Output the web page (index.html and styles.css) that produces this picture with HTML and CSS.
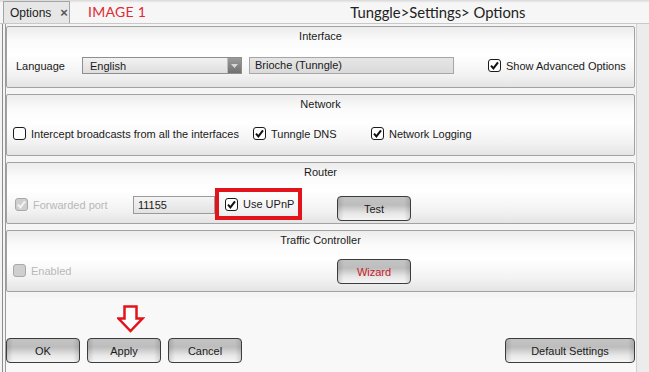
FILE: index.html
```html
<!DOCTYPE html>
<html>
<head>
<meta charset="utf-8">
<link rel="stylesheet" href="styles.css">
</head>
<body>
<div class="window">
  <div class="topbar">
    <div class="tab"><span>Options</span><span class="tab-x">×</span></div>
    <div class="img-label">IMAGE 1</div>
    <div class="crumb">Tunggle&gt;Settings&gt; Options</div>
  </div>
  <div class="frame">
    <div class="content">
      <div class="panel">
        <div class="panel-title">Interface</div>
        <div class="panel-body iface">
          <span class="lang-label">Language</span>
          <div class="select"><span>English</span><span class="select-btn"><svg width="7" height="4" viewBox="0 0 7 4"><path d="M0 0H7L3.5 4Z" fill="#d8d8d8"/></svg></span></div>
          <div class="field">Brioche (Tunngle)</div>
          <label class="check adv"><svg class="cb" width="13" height="13" viewBox="0 0 13 13"><rect x="0.5" y="0.5" width="12" height="12" rx="2.5" fill="#fff" stroke="#1a1a1a"/><path d="M3 6.6L5.4 9.4L10 3.4" fill="none" stroke="#111" stroke-width="2"/></svg>Show Advanced Options</label>
        </div>
      </div>
      <div class="panel">
        <div class="panel-title">Network</div>
        <div class="panel-body net">
          <label class="check w240"><svg class="cb" width="13" height="13" viewBox="0 0 13 13"><rect x="0.5" y="0.5" width="12" height="12" rx="2.5" fill="#fff" stroke="#1a1a1a"/></svg>Intercept broadcasts from all the interfaces</label>
          <label class="check w118"><svg class="cb" width="13" height="13" viewBox="0 0 13 13"><rect x="0.5" y="0.5" width="12" height="12" rx="2.5" fill="#fff" stroke="#1a1a1a"/><path d="M3 6.6L5.4 9.4L10 3.4" fill="none" stroke="#111" stroke-width="2"/></svg>Tunngle DNS</label>
          <label class="check"><svg class="cb" width="13" height="13" viewBox="0 0 13 13"><rect x="0.5" y="0.5" width="12" height="12" rx="2.5" fill="#fff" stroke="#1a1a1a"/><path d="M3 6.6L5.4 9.4L10 3.4" fill="none" stroke="#111" stroke-width="2"/></svg>Network Logging</label>
        </div>
      </div>
      <div class="panel">
        <div class="panel-title">Router</div>
        <div class="panel-body router">
          <label class="check disabled fwd"><svg class="cb" width="13" height="13" viewBox="0 0 13 13"><rect x="0.5" y="0.5" width="12" height="12" rx="2.5" fill="#cfcfcf" stroke="#a8a8a8"/><path d="M3 6.6L5.4 9.4L10 3.4" fill="none" stroke="#f4f4f4" stroke-width="2"/></svg>Forwarded port</label>
          <div class="port">11155</div>
          <div class="highlight"><label class="check"><svg class="cb" width="13" height="13" viewBox="0 0 13 13"><rect x="0.5" y="0.5" width="12" height="12" rx="2.5" fill="#fff" stroke="#1a1a1a"/><path d="M3 6.6L5.4 9.4L10 3.4" fill="none" stroke="#111" stroke-width="2"/></svg>Use UPnP</label></div>
          <button class="btn test">Test</button>
        </div>
      </div>
      <div class="panel">
        <div class="panel-title">Traffic Controller</div>
        <div class="panel-body traffic">
          <label class="check disabled enabled"><svg class="cb" width="13" height="13" viewBox="0 0 13 13"><rect x="0.5" y="0.5" width="12" height="12" rx="2.5" fill="#cfcfcf" stroke="#a8a8a8"/></svg>Enabled</label>
          <button class="btn wizard">Wizard</button>
        </div>
      </div>
      <div class="bottom">
        <div class="arrow-row"><svg class="arrow" width="28" height="28" viewBox="0 0 28 28"><path d="M7.5 1.5H19.5V13.5H25.5L13.5 26L1.5 13.5H7.5Z" fill="#fff" stroke="#e3131b" stroke-width="2.5" stroke-linejoin="miter"/></svg></div>
        <div class="btn-row">
          <button class="btn">OK</button>
          <button class="btn">Apply</button>
          <button class="btn">Cancel</button>
          <button class="btn default">Default Settings</button>
        </div>
      </div>
    </div>
    <div class="side"></div>
  </div>
</div>
</body>
</html>
```
FILE: styles.css
```css
* { box-sizing: border-box; }
html, body { margin: 0; padding: 0; }
body {
  width: 649px;
  height: 372px;
  overflow: hidden;
  font-family: "Liberation Sans", Arial, sans-serif;
  font-size: 11px;
  color: #1a1a1a;
  background: #f4f4f4;
}
.window {
  width: 649px;
  height: 372px;
  display: flex;
  flex-direction: column;
}
.topbar {
  height: 24px;
  display: flex;
  align-items: flex-end;
  background: linear-gradient(#d8d8d8 0, #f6f6f6 3px, #f6f6f6);
  border-bottom: 1px solid #c8c8c8;
  padding-left: 3px;
}
.tab {
  width: 67px;
  height: 22px;
  border: 1px solid #a4a4a4;
  border-bottom: none;
  background: #e7e7e7;
  display: flex;
  align-items: center;
  padding-left: 6px;
  font-size: 12px;
  color: #202020;
}
.tab-x {
  margin-left: 9px;
  font-weight: bold;
  font-size: 13px;
  color: #555;
}
.img-label {
  margin-left: 18px;
  align-self: center;
  font-family: Lato, "Open Sans", sans-serif;
  font-size: 14px;
  color: #e02a32;
  letter-spacing: 0.3px;
}
.crumb {
  margin-left: 204px;
  align-self: center;
  font-family: Lato, "Open Sans", sans-serif;
  font-size: 14.8px;
  color: #222;
}
.frame {
  flex: 1;
  display: flex;
  border-left: 1px solid #8c8c8c;
  margin-left: 2px;
}
.content {
  width: 631px;
  border-left: 1px solid #9a9a9a;
  margin-left: 2px;
  padding: 2px 0 0 0;
  display: flex;
  flex-direction: column;
  gap: 6px;
  background: #f5f5f5;
}
.side {
  flex: 1;
  background: #ececec;
  border-left: 1px solid #d0d0d0;
}
.panel {
  height: 62px;
  width: 629px;
  border: 1px solid #a2a2a2;
  border-radius: 2px;
  background: linear-gradient(#ececec 0, #fbfbfb 14px, #ffffff 28px, #f2f2f2 48px, #e4e4e4 100%);
  display: flex;
  flex-direction: column;
}
.panel-title {
  height: 18px;
  text-align: center;
  line-height: 16px;
  padding-top: 1px;
}
.panel-body {
  flex: 1;
  display: flex;
  align-items: center;
  padding-bottom: 1px;
}
.check {
  display: flex;
  align-items: center;
  white-space: nowrap;
}
.cb { margin-right: 5px; flex: none; }
.disabled { color: #b8b8b8; }
.iface { padding-left: 9px; }
.lang-label { width: 66px; }
.select {
  width: 160px;
  height: 17px;
  border: 1px solid #8e8e8e;
  background: linear-gradient(#f2f2f2, #dedede);
  display: flex;
  align-items: center;
  justify-content: space-between;
  padding-left: 7px;
}
.select-btn {
  width: 14px;
  height: 15px;
  background: linear-gradient(#9c9c9c, #707070);
  border-left: 1px solid #bdbdbd;
  display: flex;
  align-items: center;
  justify-content: center;
}
.field {
  margin-left: 7px;
  width: 205px;
  height: 17px;
  border: 1px solid #a6a6a6;
  background: linear-gradient(#e6e6e6, #dadada);
  padding-left: 5px;
  line-height: 15px;
}
.adv { margin-left: 34px; }
.net { padding-left: 6px; }
.w240 { width: 240px; }
.w118 { width: 118px; }
.router { padding-left: 8px; align-items: flex-start; }
.fwd { width: 118px; margin-top: 17px; }
.port {
  width: 82px;
  height: 18px;
  border: 1px solid #9a9a9a;
  background: linear-gradient(#f4f4f4, #e2e2e2);
  padding-left: 4px;
  line-height: 16px;
  margin-top: 15px;
}
.highlight {
  width: 87px;
  height: 32px;
  border: 4px solid #e3131b;
  padding-left: 6px;
  display: flex;
  align-items: center;
  margin-top: 7px;
}
.btn {
  width: 74px;
  height: 25px;
  border: 1px solid #3c3c3c;
  border-radius: 4px;
  font-family: "Liberation Sans", Arial, sans-serif;
  font-size: 11px;
  color: #1a1a1a;
  padding: 0;
  background:
    linear-gradient(90deg, rgba(0,0,0,0.12), rgba(0,0,0,0) 6px, rgba(0,0,0,0) calc(100% - 6px), rgba(0,0,0,0.12)),
    linear-gradient(#c4c4c4, #bdbdbd 35%, #e6e6e6 70%, #f6f6f6);
}
.test { margin-left: 35px; margin-top: 15px; }
.traffic { padding-left: 6px; align-items: flex-start; }
.enabled { width: 324px; margin-top: 15px; }
.wizard { color: #c8202a; margin-top: 10px; }
.bottom {
  flex: 1;
  display: flex;
  flex-direction: column;
  background: #f8f8f8;
}
.arrow-row {
  height: 40px;
  padding: 7px 0 0 111px;
}
.btn-row {
  display: flex;
  gap: 7px;
}
.default { width: 130px; margin-left: auto; margin-right: 1px; }
```
